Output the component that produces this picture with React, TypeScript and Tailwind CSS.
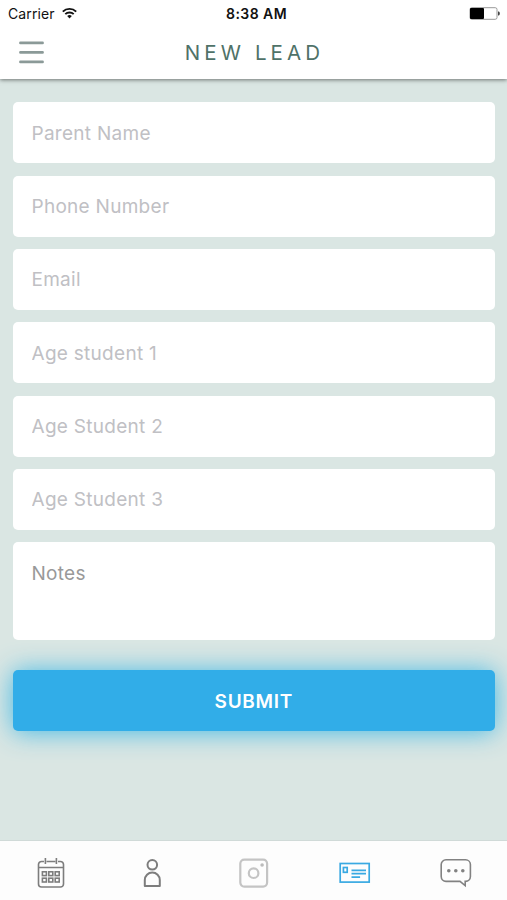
import { useState } from 'react'

const fields = ['Parent Name', 'Phone Number', 'Email', 'Age student 1', 'Age Student 2', 'Age Student 3']

function StatusBar() {
  return (
    <div className="flex h-[27px] items-center justify-between pl-[8px] pr-[7px] text-[14px] text-[#111]">
      <div className="flex flex-1 items-center gap-[7px]">
        <span className="tracking-[0.1px]">Carrier</span>
        <svg width="15" height="12" viewBox="0 0 15 12" fill="none" stroke="#111" strokeWidth="1.9" className="-mt-px">
          <path d="M0.8 4.6a9.5 9.5 0 0 1 13.4 0" />
          <path d="M3.3 7.2a5.9 5.9 0 0 1 8.4 0" />
          <path d="M7.5 11.4 5.2 9a3.3 3.3 0 0 1 4.6 0z" fill="#111" stroke="none" />
        </svg>
      </div>
      <span className="pl-[5px] font-semibold tracking-[0.45px]">8:38 AM</span>
      <div className="flex flex-1 justify-end">
        <svg width="31" height="13" viewBox="0 0 31 13" fill="none">
          <rect x="1" y="0.7" width="27" height="11.6" rx="1.8" fill="#fff" stroke="#999" />
          <rect x="1" y="1" width="14" height="11" rx="1" fill="#000" />
          <path d="M29 4.5h0.6a1.2 2 0 0 1 0 4H29z" fill="#444" />
        </svg>
      </div>
    </div>
  )
}

function MenuIcon() {
  return (
    <svg width="25" height="24" viewBox="0 0 25 24" stroke="#8b9a98" strokeWidth="2.6" strokeLinecap="round">
      <path d="M1.4 1.9h22.2M1.4 11.4h22.2M1.4 20.9h22.2" />
    </svg>
  )
}

function CalendarIcon() {
  return (
    <svg width="28" height="32" viewBox="0 0 28 32" fill="none" stroke="#7d7d7d" strokeWidth="1.6">
      <path d="M7 4.5H4.5a3 3 0 0 0-3 3V27a3 3 0 0 0 3 3h19a3 3 0 0 0 3-3V7.5a3 3 0 0 0-3-3H21M9.5 4.5h9M1.5 10.5h25" />
      <path d="M8.4 1v6M19.4 1v6" />
      {[5.4, 11.8, 18.2].map((x) => (
        <g key={x}>
          <rect x={x} y="14.8" width="4" height="3.8" />
          <rect x={x} y="21.2" width="4" height="3.8" />
        </g>
      ))}
    </svg>
  )
}

function PersonIcon() {
  return (
    <svg width="20" height="30" viewBox="0 0 20 30" fill="none" stroke="#7d7d7d" strokeWidth="2">
      <circle cx="10.3" cy="6.8" r="4.8" />
      <path d="M2.8 28v-6a7.5 7.5 0 0 1 15 0v6z" strokeLinejoin="round" />
    </svg>
  )
}

function CameraIcon() {
  return (
    <svg width="30" height="30" viewBox="0 0 30 30" fill="none" stroke="#c4c4c4" strokeWidth="2.2">
      <rect x="1.3" y="1.6" width="26.8" height="27" rx="4" />
      <circle cx="14.6" cy="15.2" r="4.8" />
      <circle cx="23.1" cy="7" r="1.8" fill="#bbb" stroke="none" />
    </svg>
  )
}

function CardIcon() {
  return (
    <svg width="32" height="22" viewBox="0 0 32 22" fill="none" stroke="#39a9e2" strokeWidth="1.7">
      <rect x="1.2" y="1.5" width="29" height="18.6" />
      <rect x="4.4" y="5.5" width="3.8" height="4.8" />
      <path d="M12.5 8.3H27M12.5 11.6H27M12.5 15.2h8.6" />
    </svg>
  )
}

function ChatIcon() {
  return (
    <svg width="32" height="30" viewBox="0 0 32 30" fill="none" stroke="#828282" strokeWidth="1.6">
      <path d="M6 1.8h19.6a4.8 4.8 0 0 1 4.8 4.8v12a4.8 4.8 0 0 1-4.8 4.8h-.4v4.2l-5.2-4.2H6a4.8 4.8 0 0 1-4.8-4.8v-12A4.8 4.8 0 0 1 6 1.8z" />
      <g fill="#828282" stroke="none">
        <circle cx="8.8" cy="12.7" r="1.8" />
        <circle cx="15.8" cy="12.7" r="1.8" />
        <circle cx="22.8" cy="12.7" r="1.8" />
      </g>
    </svg>
  )
}

const tabs = [
  { id: 'calendar', Icon: CalendarIcon },
  { id: 'person', Icon: PersonIcon },
  { id: 'camera', Icon: CameraIcon },
  { id: 'card', Icon: CardIcon },
  { id: 'chat', Icon: ChatIcon },
]

export default function App() {
  const [values, setValues] = useState<Record<string, string>>({})

  const update = (name: string, value: string) => setValues({ ...values, [name]: value })

  return (
    <div className="flex h-[900px] w-full flex-col bg-[#dae6e3] font-['Inter',sans-serif]">
      <header className="z-10 h-[79px] bg-white shadow-[0_1px_4px_rgba(0,0,0,0.5)]">
        <StatusBar />
        <div className="flex h-[51px] items-center px-[19px]">
          <button>
            <MenuIcon />
          </button>
          <h1 className="flex-1 pr-[23px] pt-[2px] text-center text-[20.5px] tracking-[4.1px] text-[#4f7268]">NEW LEAD</h1>
        </div>
      </header>

      <form className="flex flex-1 flex-col pl-[13px] pr-[12.4px] pt-[23.4px] text-[19px]" onSubmit={(e) => e.preventDefault()}>
        <div className="flex flex-col gap-[12.3px]">
          {fields.map((name) => (
            <input
              key={name}
              placeholder={name}
              value={values[name] || ''}
              onChange={(e) => update(name, e.target.value)}
              className="h-[61px] w-full rounded-[5px] bg-white px-[18.5px] pt-px tracking-[0.28px] outline-none placeholder:text-[#c0c0c4]"
            />
          ))}
          <textarea
            placeholder="Notes"
            value={values.notes || ''}
            onChange={(e) => update('notes', e.target.value)}
            className="h-[97.4px] w-full resize-none rounded-[5px] bg-white px-[18.5px] pt-[18px] tracking-[0.28px] outline-none placeholder:text-[#999]"
          />
        </div>
        <button className="mt-[30.6px] h-[61px] w-full rounded-[5px] bg-[#31ade8] pt-[3px] font-semibold tracking-[0.7px] text-white shadow-[0_1px_26px_rgba(49,180,228,0.9)]">
          SUBMIT
        </button>
      </form>

      <nav className="flex h-[60px] border-t border-[#d0dad8] bg-[#fdfdfd]">
        {tabs.map(({ id, Icon }) => (
          <button key={id} className="flex flex-1 items-center justify-center pt-[4px]">
            <Icon />
          </button>
        ))}
      </nav>
    </div>
  )
}
